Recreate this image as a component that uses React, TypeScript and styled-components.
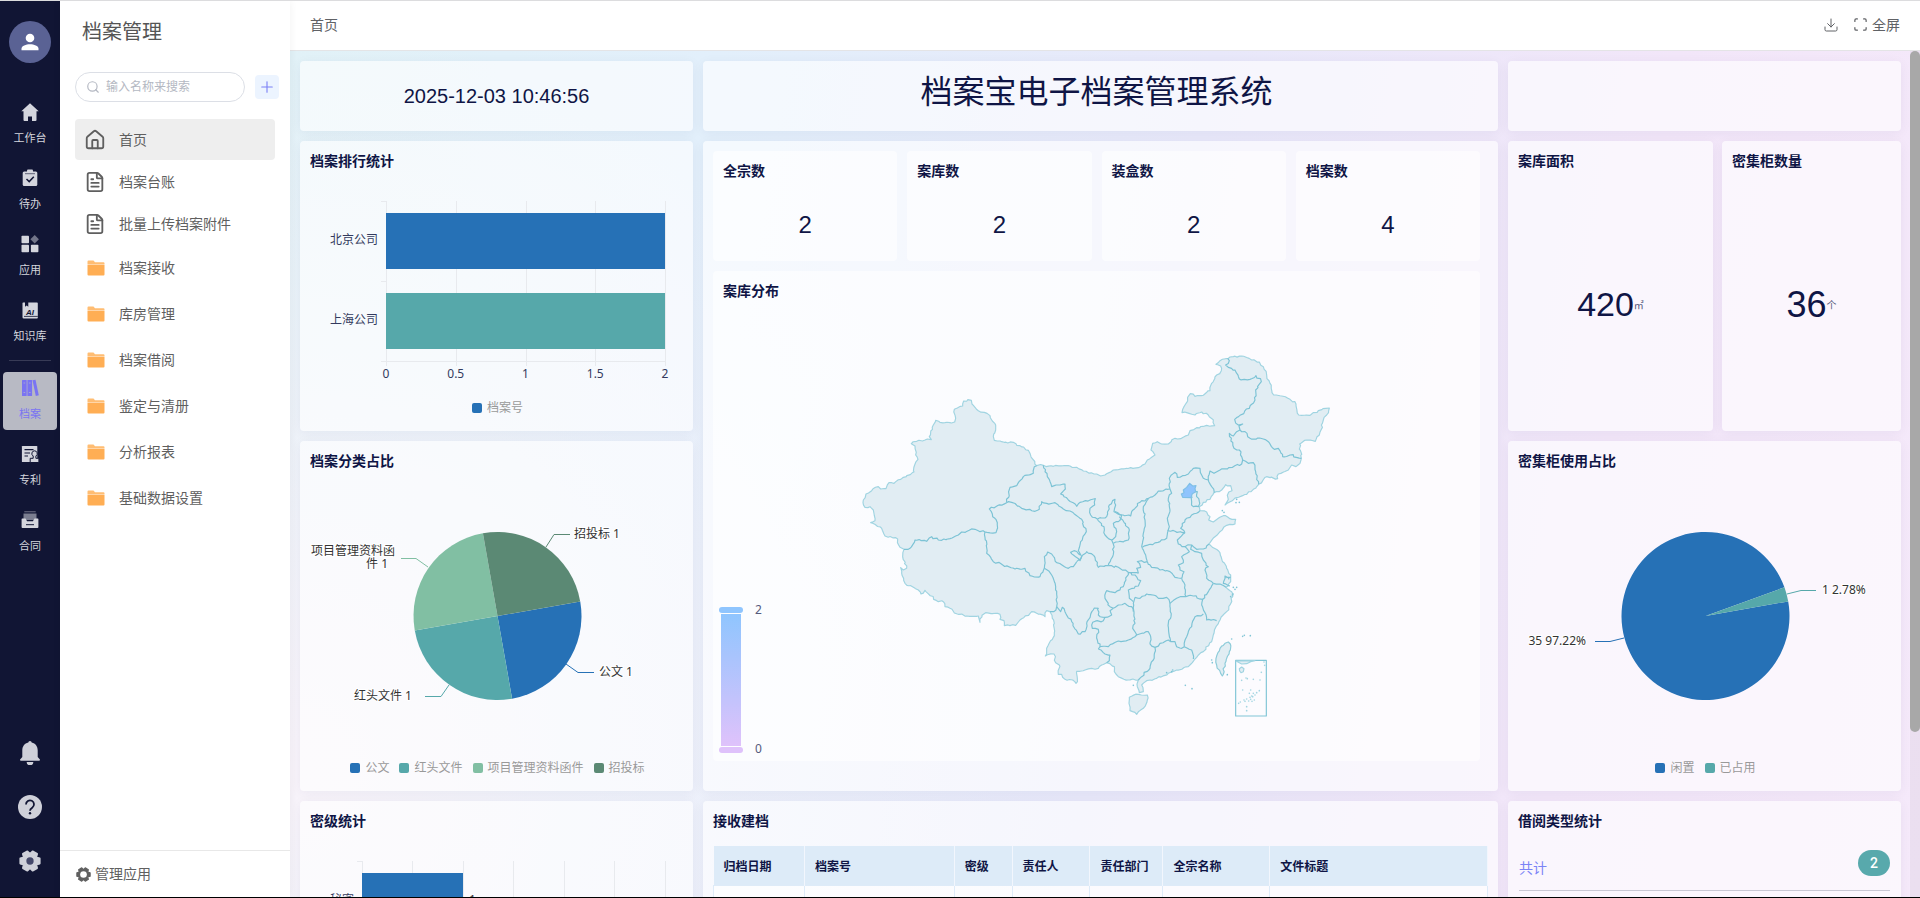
import React from "react";
import styled, { createGlobalStyle, css } from "styled-components";
import { Download, FileText, House, Plus, Scan, Search } from "lucide-react";

const sans = `"Noto Sans", "Noto Sans CJK SC", sans-serif`;
const arial = `"Liberation Sans", "Noto Sans CJK SC", sans-serif`;
const navy = "#0f1545";
const palette = {
  blue: "#2671b6",
  teal: "#56a8aa",
  green: "#81bfa3",
  moss: "#5b8974",
};

const GlobalStyle = createGlobalStyle`
  * { box-sizing: border-box; }
  body { margin: 0; font-family: ${sans}; font-size: 14px; color: #606266; }
  button { font: inherit; border: 0; padding: 0; background: none; cursor: pointer; }
  a { color: inherit; text-decoration: none; }
  h1, h2, p { margin: 0; font-weight: 400; }
`;

/* ---------- shell ---------- */

const Shell = styled.div`
  display: flex;
  height: 100vh;
  border-top: 1px solid #dcdcde;
  border-bottom: 1px solid #000;
  overflow: hidden;
  background: #fff;
`;

const Rail = styled.aside`
  display: flex;
  flex-direction: column;
  align-items: center;
  flex: none;
  width: 60px;
  padding: 20px 3px 24px;
  background: #111534;
`;

const Avatar = styled.button`
  display: grid;
  place-items: center;
  width: 42px;
  height: 42px;
  flex: none;
  border-radius: 50%;
  background: #5a6294;
`;

const RailNav = styled.nav`
  display: flex;
  flex-direction: column;
  align-items: center;
  gap: 8px;
  width: 100%;
  margin-top: 33px;
`;

const RailItem = styled.button<{ $active?: boolean }>`
  display: flex;
  flex-direction: column;
  align-items: center;
  gap: 8px;
  width: 100%;
  height: 58px;
  padding-top: 7px;
  border-radius: 4px;
  font-size: 11px;
  line-height: 18px;
  color: #d4d5dd;
  ${(p) =>
    p.$active &&
    css`
      background: #b8bac4;
      color: #7a74f2;
    `}
`;

const RailDivider = styled.hr`
  width: 42px;
  height: 1px;
  margin: 0 0 3px;
  border: 0;
  background: #383b56;
`;

const RailTools = styled.div`
  display: flex;
  flex-direction: column;
  gap: 30px;
  margin-top: auto;
`;

const RailTool = styled.button`
  display: grid;
  place-items: center;
  width: 24px;
  height: 24px;
  color: #cfd0d9;
`;

const Side = styled.aside`
  display: flex;
  flex-direction: column;
  flex: none;
  width: 230px;
  background: #fff;
  position: relative;
  z-index: 1;
  box-shadow: 0 0 8px rgba(0, 0, 0, 0.06);
`;

const SideTitle = styled.h1`
  padding: 16px 22px 0;
  font-size: 20px;
  line-height: 30px;
  color: #555;
`;

const SearchRow = styled.form`
  display: flex;
  align-items: center;
  gap: 10px;
  padding: 25px 11px 17px 15px;
`;

const SearchBox = styled.label`
  display: flex;
  align-items: center;
  gap: 6px;
  width: 170px;
  height: 30px;
  padding: 0 10px;
  border: 1px solid #dcdfe6;
  border-radius: 15px;
  color: #b4b8c2;

  svg {
    flex: none;
  }

  input {
    width: 100%;
    min-width: 0;
    padding: 0;
    border: 0;
    outline: 0;
    background: none;
    font-family: inherit;
    font-size: 12px;
    line-height: 18px;
    color: #606266;
  }

  input::placeholder {
    color: #b4b8c2;
  }
`;

const AddButton = styled.button`
  display: grid;
  place-items: center;
  width: 24px;
  height: 24px;
  border-radius: 4px;
  background: #ecf4ff;
  color: #7b80f6;
`;

const Menu = styled.nav`
  display: flex;
  flex-direction: column;
  padding: 0 15px;
`;

const MenuItem = styled.a<{ $active?: boolean; $folder?: boolean }>`
  display: flex;
  align-items: center;
  gap: 13px;
  height: ${(p) => (p.$folder ? "46px" : "41px")};
  margin-bottom: ${(p) => (p.$folder ? "0" : "1px")};
  padding-left: 9px;
  border-radius: 4px;
  font-size: 14px;
  line-height: 20px;
  color: #5f5f5f;
  background: ${(p) => (p.$active ? "#eeeeee" : "transparent")};
`;

const SideFooter = styled.button`
  display: flex;
  align-items: center;
  gap: 4px;
  height: 47px;
  margin-top: auto;
  padding-left: 16px;
  border-top: 1px solid #e8e8e8;
  line-height: 20px;
  color: #606060;
`;

const Main = styled.main`
  display: flex;
  flex-direction: column;
  flex: 1;
  min-width: 0;
`;

const TopBar = styled.header`
  display: flex;
  align-items: center;
  gap: 14px;
  flex: none;
  height: 50px;
  padding: 0 20px 2px;
  border-bottom: 1px solid #e4e4e6;
  line-height: 20px;
`;

const Crumb = styled.span`
  flex: 1;
`;

const TopButton = styled.button`
  display: flex;
  align-items: center;
  gap: 4px;
  line-height: 20px;
  color: #606266;
`;

const Stage = styled.div`
  display: flex;
  flex: 1;
  min-height: 0;
  background: radial-gradient(circle at 0% 85%, #f8f3fa 0%, rgba(244, 241, 249, 0) 42%),
    linear-gradient(100deg, #e0f1f7 0%, #e2effb 24%, #e8e8fa 52%, #f2e6f9 78%, #f5e9fa 100%);
`;

const Scroller = styled.div`
  flex: 1;
  min-width: 0;
  overflow-y: auto;
  scrollbar-width: none;
`;

const ScrollTrack = styled.div`
  flex: none;
  width: 10px;
  background: rgba(0, 0, 0, 0.04);
`;

const ScrollThumb = styled.div`
  height: 80.5%;
  border-radius: 5px;
  background: #a8a8a8;
`;

/* ---------- dashboard ---------- */

const Board = styled.div`
  display: grid;
  grid-template-columns: 393fr 795fr 393fr;
  grid-template-rows: 70px 290px 350px 291px;
  gap: 10px;
  padding: 10px 9px 10px 10px;
`;

const Card = styled.section<{ $tall?: boolean }>`
  display: flex;
  flex-direction: column;
  min-width: 0;
  border-radius: 4px;
  background: rgba(255, 255, 255, 0.62);
  box-shadow: 0 2px 12px rgba(20, 30, 80, 0.05);
  grid-row: ${(p) => (p.$tall ? "span 2" : "auto")};
`;

const InnerCard = styled.section`
  display: flex;
  flex-direction: column;
  min-width: 0;
  border-radius: 4px;
  background: rgba(255, 255, 255, 0.6);
`;

const CardTitle = styled.h2`
  flex: none;
  padding: 9px 10px 7px;
  font-size: 14px;
  font-weight: 600;
  line-height: 21px;
  color: ${navy};
`;

const Clock = styled.time`
  margin: auto;
  font-family: ${arial};
  font-size: 20px;
  line-height: 30px;
  color: ${navy};
`;

const SystemName = styled.h2`
  padding: 10px 8px 0 0;
  text-align: center;
  font-size: 32px;
  line-height: 40px;
  color: ${navy};
`;

const Center = styled.div`
  display: flex;
  flex-direction: column;
  gap: 10px;
  padding: 10px 18px 30px 10px;
  flex: 1;
`;

const Stats = styled.div`
  display: grid;
  grid-template-columns: repeat(4, 1fr);
  gap: 10px;

  section {
    height: 110px;
  }
`;

const MapCard = styled(InnerCard)`
  flex: 1;
`;

const Value = styled.p<{ $size?: number }>`
  display: flex;
  align-items: center;
  justify-content: center;
  flex: 1;
  font-family: ${arial};
  font-size: ${(p) => p.$size ?? 24}px;
  color: ${navy};

  small {
    font-size: 10px;
    color: #555a7c;
  }
`;

const Pair = styled.div`
  display: grid;
  grid-template-columns: 205fr 179fr;
  gap: 9px;
`;

const Chart = styled.svg`
  display: block;
  flex: 1;
  width: 100%;
  min-height: 0;
  font-family: ${sans};
  font-size: 12px;
`;

const PieLabel = styled.text`
  fill: #333;
  stroke: #fff;
  stroke-width: 2px;
  paint-order: stroke;
`;

const Legend = styled.ul`
  display: flex;
  flex: none;
  justify-content: center;
  gap: 10px;
  height: 20px;
  margin: 0 0 13px;
  padding: 0 0 0 2px;
  list-style: none;
  font-size: 12px;
  line-height: 20px;
  color: #999;
`;

const LegendItem = styled.li<{ $color: string }>`
  display: flex;
  align-items: center;
  gap: 5px;

  &::before {
    content: "";
    width: 10px;
    height: 10px;
    border-radius: 2px;
    background: ${(p) => p.$color};
  }
`;

const Table = styled.table`
  width: calc(100% - 20px);
  margin: 8px 10px 0;
  border-collapse: collapse;
  table-layout: fixed;
  font-size: 12px;
  color: ${navy};

  th {
    height: 39px;
    padding: 4px 10px 0;
    border-right: 1px solid #f2f6fd;
    background: #ddebf8;
    font-weight: 600;
    line-height: 18px;
    text-align: left;
  }

  td {
    height: 39px;
    padding: 0 10px;
    border: 1px solid #deebf8;
    background: rgba(255, 255, 255, 0.6);
  }
`;

const TotalRow = styled.div`
  display: flex;
  align-items: flex-start;
  justify-content: space-between;
  height: 41px;
  margin: 12px 11px 0;
  border-bottom: 1px solid #c9c8d4;
`;

const TotalLink = styled.a`
  padding-top: 8px;
  line-height: 20px;
  color: #7a84f6;
`;

const Badge = styled.span`
  width: 32px;
  border-radius: 13px;
  background: #58a9ac;
  font-family: Roboto, sans-serif;
  font-weight: 500;
  line-height: 26px;
  text-align: center;
  color: #fff;
`;

/* ---------- icons ---------- */

const dark = "#111534";

const Glyph = ({ children, size = 18 }: { children: React.ReactNode; size?: number }) => (
  <svg width={size} height={size} viewBox="0 0 18 18" fill="currentColor" aria-hidden="true">
    {children}
  </svg>
);

const railIcons: Record<string, React.ReactNode> = {
  home: <path d="M9 .2.3 8.3h2.2V17a1 1 0 0 0 1 1H7v-4.6h4V18h3.500a1 1 0 0 0 1-1V8.300h2.200Z" />,
  todo: (
    <>
      <rect x="1.700" y="2.500" width="14.600" height="14.500" rx="1.500" />
      <rect x="6" y="0.500" width="6" height="4" rx="1" />
      <path d="M4 4.700h10" stroke={dark} strokeWidth=".6" />
      <path d="m5.500 10 2.700 2.600 4.600-4.800" fill="none" stroke={dark} strokeWidth="1.500" />
    </>
  ),
  apps: (
    <>
      <rect x="0.500" y="0.700" width="7.500" height="7.500" rx=".8" />
      <rect x="0.500" y="9.800" width="7.500" height="7.500" rx=".8" />
      <rect x="9.900" y="9.800" width="7.500" height="7.500" rx=".8" />
      <path d="m13.700 0 4.200 4.300-4.200 4.300-4.300-4.300Z" opacity=".5" />
    </>
  ),
  ai: (
    <>
      <path d="M2 1.500h2v4.200l1.700-1.300 1.600 1.300V1.500H16a.8.8 0 0 1 .8.8v14.500a.8.8 0 0 1-.8.8H2.800a1.300 1.300 0 0 1-1.300-1.300V2Z" />
      <path d="M3 15.400h13.800" stroke={dark} strokeWidth=".8" />
      <text x="5" y="13.500" fill={dark} fontSize="8" fontWeight="700" fontStyle="italic" fontFamily="Liberation Sans, sans-serif">
        AI
      </text>
    </>
  ),
  books: (
    <>
      <rect x="1" y="1" width="4.700" height="16" rx=".5" />
      <rect x="6.400" y="1" width="4.700" height="16" rx=".5" />
      <path d="m11.500 1.200 3-.5 3.300 15.500-3 .7Z" />
      <path d="M2.500 13.500h1.700M7.900 13.500h1.700M2.500 4h1.700M7.900 4h1.700" stroke="#b8bac4" strokeWidth=".7" />
    </>
  ),
  patent: (
    <>
      <path d="M1.500 1h14.200a.6.6 0 0 1 .6.6V17H1.500a.6.600 0 0 1-.6-.6V1.600A.6.6 0 0 1 1.500 1Z" />
      <path d="M3.500 4.700h9M3.500 8h5.500M3.500 11h3.500" stroke={dark} strokeWidth="1.200" />
      <path d="M13.500 5.800a2.800 2.800 0 0 1 1.400 5.200v2.300h3v4.200H9.200v-4.200h3V11a2.800 2.800 0 0 1 1.300-5.200Z" stroke={dark} />
    </>
  ),
  tray: (
    <>
      <path d="M3.300.8h11.400" stroke="currentColor" opacity=".5" />
      <path d="M2.500 2.500h13v6.500h-13Z" opacity=".55" />
      <path d="M1.200 7.500h3.300l1.600 2.800h5.800l1.600-2.800h3.300a.6.6 0 0 1 .6.6V16a.9.9 0 0 1-.9.9H1.500a.9.9 0 0 1-.9-.9V8.100a.6.6 0 0 1 .6-.6Z" />
      <path d="M5 13.700h8" stroke={dark} />
    </>
  ),
};

/** Six-toothed cog, teeth on the horizontal axis. */
const cogPath = Array.from({ length: 6 }, (_, i) =>
  [
    [-15, 8.2],
    [15, 8.2],
    [30, 5.8],
  ].map(([offset, radius]) => {
    const angle = ((i * 60 + offset) * Math.PI) / 180;
    return `${(9 + radius * Math.cos(angle)).toFixed(2)},${(9 + radius * Math.sin(angle)).toFixed(2)}`;
  })
)
  .flat()
  .join(" ");

const Cog = ({ size, hole, holeFill }: { size: number; hole: number; holeFill: string }) => (
  <Glyph size={size}>
    <polygon points={cogPath} stroke="currentColor" strokeWidth="1.500" strokeLinejoin="round" />
    <circle cx="9" cy="9" r={hole} fill={holeFill} />
  </Glyph>
);

const FolderIcon = () => (
  <svg width="22" height="22" viewBox="-2 -1 22 22" aria-hidden="true">
    <path d="M1.500 3.500a1 1 0 0 1 1-1h5l1.500 1.700h8.500a1 1 0 0 1 1 1v.8h-17Z" fill="#ffbd73" />
    <path d="M1.500 6.500h17v10a1 1 0 0 1-1 1h-15a1 1 0 0 1-1-1Z" fill="#ffae54" />
  </svg>
);

/* ---------- charts ---------- */

const polar = (cx: number, cy: number, r: number, deg: number) => {
  const a = (deg * Math.PI) / 180;
  return `${(cx + r * Math.cos(a)).toFixed(2)} ${(cy + r * Math.sin(a)).toFixed(2)}`;
};

type Slice = { from: number; to: number; color: string; leader: string };

const Pie = ({ slices, children }: { slices: Slice[]; children: React.ReactNode }) => (
  <Chart viewBox="0 0 393 280" role="img">
    {slices.map((s) => (
      <g key={s.from}>
        <path
          d={`M197.5 138L${polar(197.5, 138, 84, s.from)}A84 84 0 ${s.to - s.from > 180 ? 1 : 0} 1 ${polar(197.5, 138, 84, s.to)}Z`}
          fill={s.color}
        />
        <polyline points={s.leader} fill="none" stroke={s.color} />
      </g>
    ))}
    {children}
  </Chart>
);

const RankingChart = () => (
  <Chart viewBox="0 0 393 220" role="img">
    <g stroke="#e8eaee" shapeRendering="crispEdges">
      {[86, 156, 226, 295, 365].map((x) => (
        <path key={x} d={`M${x}.5 23V188`} />
      ))}
      <path d="M81 23.5h5M81 103.500h5M81 183.500H365" />
    </g>
    <rect x="86" y="35" width="279" height="56" fill={palette.blue} />
    <rect x="86" y="115" width="279" height="56" fill={palette.teal} />
    <g fill="#333a5e" textAnchor="end">
      <text x="78" y="66">北京公司</text>
      <text x="78" y="146">上海公司</text>
    </g>
    <g fill="#333a5e" textAnchor="middle">
      {["0", "0.5", "1", "1.5", "2"].map((t, i) => (
        <text key={t} x={86 + i * 69.75} y="200">
          {t}
        </text>
      ))}
    </g>
  </Chart>
);

const SecrecyChart = () => (
  <Chart viewBox="0 0 393 254" role="img">
    <g stroke="#e8eaee" shapeRendering="crispEdges">
      {[62, 112, 163, 213, 264, 314, 365].map((x) => (
        <path key={x} d={`M${x}.5 23V217`} />
      ))}
      <path d="M57 23.500h5" />
    </g>
    <rect x="62" y="35" width="101" height="56" fill={palette.blue} />
    <text x="54" y="66" textAnchor="end" fill="#333a5e">秘密</text>
    <text x="169" y="66" fill="#333">1</text>
  </Chart>
);

type Point = [number, number];

const parse = (s: string): Point[] => s.trim().split(/\s+/).map((p) => p.split(",").map(Number) as Point);

/** Breaks long straight runs into short uneven ones so borders read as natural lines. */
const natural = (s: string, closed = false) => {
  const pts = parse(s);
  if (closed) pts.push(pts[0]);
  let seed = pts[0][0] + pts[0][1] * 7;
  const rnd = () => {
    seed = (seed * 9301 + 49297) % 233280;
    return seed / 233280 - 0.5;
  };
  const out: string[] = [`M${pts[0]}`];
  for (let i = 1; i < pts.length; i++) {
    const [ax, ay] = pts[i - 1];
    const [bx, by] = pts[i];
    const n = Math.floor(Math.hypot(bx - ax, by - ay) / 7);
    for (let k = 1; k < n; k++) {
      out.push(`L${(ax + ((bx - ax) * k) / n + rnd() * 6).toFixed(1)},${(ay + ((by - ay) * k) / n + rnd() * 6).toFixed(1)}`);
    }
    out.push(`L${bx},${by}`);
  }
  return out.join("") + (closed ? "Z" : "");
};

const mainland = natural(
  `40,480 48,462 65,452 85,440 92,447 108,446 117,428 132,430 160,412 192,396 194,375 204,358 197,345 195,318 184,311 200,304
  232,297 244,299 238,290 250,255 257,241 270,247 300,248 314,246 317,235 313,208 322,204 338,198 341,183 364,181 366,192
  385,212 403,217 420,227 427,243 437,255 437,270 430,290 433,301 455,305 490,307 510,317 535,331 543,350 560,377 580,376
  610,379 660,378 680,382 700,393 740,402 752,408 765,405 790,390 830,385 865,383 885,372 892,360 915,345 903,330 908,310
  922,305 935,312 955,312 975,295 992,296 1015,285 1020,272 1040,263 1070,256 1094,257 1090,240 1075,225 1055,216 1035,225
  1010,218 996,218 1005,195 1021,161 1035,169 1055,167 1080,152 1085,130 1100,105 1114,92 1112,78 1098,73 1110,62 1135,55
  1140,51 1175,48 1205,60 1228,66 1240,80 1250,105 1260,130 1271,165 1295,168 1320,178 1338,192 1346,225 1380,226 1405,212
  1438,204 1430,225 1420,240 1413,270 1396,304 1370,300 1349,312 1354,355 1350,370 1338,380 1325,375 1315,390 1285,402
  1283,416 1250,410 1226,433 1210,448 1190,463 1160,473 1125,495 1135,478 1132,466 1146,452 1142,437 1127,434 1115,450
  1092,458 1080,478 1060,487 1048,500 1050,512 1070,516 1080,530 1076,540 1090,546 1105,535 1120,527 1140,536 1157,538
  1155,552 1130,556 1110,575 1095,590 1077,612 1105,632 1118,665 1130,685 1142,705 1142,725 1128,742 1145,755 1148,770
  1140,795 1130,815 1110,840 1098,860 1092,880 1085,905 1060,935 1035,957 1027,968 1015,980 980,990 955,1000 920,1015
  890,1022 875,1035 880,1055 868,1058 862,1040 865,1020 835,1020 805,1010 793,995 793,980 770,968 755,975 745,985 725,985
  705,990 680,994 682,1015 678,1030 668,1020 645,1018 635,1003 625,1003 628,975 617,968 612,942 586,948 590,925 610,892
  613,850 607,835 600,815 590,812 585,830 545,815 510,840 497,856 463,857 462,842 450,838 450,823 407,818 396,826 390,847
  385,828 350,828 322,822 300,805 285,800 280,785 265,785 225,751 213,762 205,750 165,730 155,700 152,683 160,690 170,685
  158,650 162,628 150,622 143,597 105,588 95,565 62,548 75,542 70,510 60,500 45,502`,
  true
);

const westBorders = [
  "162,628 180,625 195,600 230,604 245,590 265,600 300,596 325,585 335,576 375,568 405,576",
  "405,576 438,578 442,548 428,530 418,507 470,488",
  "470,488 480,442 500,437 520,410 550,400 553,380 560,377",
  "470,488 485,487 515,505 555,514 568,508 575,485 590,490 615,488 640,507 660,513 695,538 709,575 692,605 685,632 695,650 690,662 662,637 672,632 690,645",
  "405,576 410,640 430,665 495,687 525,685 540,707 570,710 583,685",
  "583,685 583,650 593,636 605,642 620,668 655,685 670,680 680,665",
  "583,685 605,705 617,740 620,800 612,815 600,815",
  "620,800 632,815 637,802 665,845 685,882 705,875 710,850 733,804 745,805",
  "680,665 695,650 710,635 735,652 745,682 775,677",
  "580,376 592,410 605,440 645,432 646,447 632,462 655,480 680,499 690,487 736,476 734,495 720,505 722,525 742,537",
  "742,537 770,530 778,495 795,478 797,495 792,515 815,525 805,545 790,550 800,575 797,590 785,600 765,585 762,560 742,537",
  "785,600 790,612 788,650 775,677",
  "808,530 838,570 835,600 790,610",
];

const eastBorders = [
  "165,515 180,525 212,528 215,515 240,487 266,475",
  "266,475 285,465 295,453 330,447",
  "266,475 250,500 255,540 250,580 247,625",
  "247,625 257,645 262,665",
  "330,447 335,460 325,475 330,510 322,535 328,560 323,575",
  "323,575 320,595 300,605 247,622",
  "330,447 328,415 345,397 352,412 385,402 400,385 420,385 425,405 430,415 445,420",
  "445,420 450,393 462,400 480,390 545,372 548,360",
  "445,420 455,440 463,458",
  "548,360 565,370 580,368 587,395 596,433",
  "548,360 538,330 522,325 508,280 520,288 530,275 540,270",
  "540,270 555,275 570,295 610,297 625,305 643,328 655,325 668,350 690,345 724,355",
  "540,270 537,258 548,252 535,255 524,238 568,205 585,180 587,150 604,125 588,107 570,118 538,117 525,90 505,82 497,75 508,62 503,55",
  "403,455 412,455 410,470 418,485 415,500 400,500 395,485 397,470",
  "420,512 395,525 375,540 362,565 375,578",
  "323,572 345,574 375,578",
  "375,578 352,600 355,612 375,620",
  "375,620 395,615 410,628 430,627 447,612",
  "375,620 388,635 365,650 370,668 355,675 360,690 372,695 365,715",
  "262,665 275,682 300,690 330,695 345,712 365,715",
  "262,665 232,665 242,682 230,685 235,700",
  "395,615 392,628 405,635 425,640 430,660 445,680 435,690 440,715 460,730",
  "460,730 480,732 498,742",
  "512,712 495,708 490,730 510,738",
  "460,730 445,755 428,778",
  "365,715 375,735 378,770",
  "378,770 400,768 428,778 425,795 435,818 440,840 470,842",
  "430,822 405,830 395,860 380,890 373,920",
  "373,920 365,925 350,920 345,905 332,905",
  "378,770 350,775 330,790 333,830 325,850 332,905",
  "330,790 320,772 300,775 260,762 240,775 225,772",
  "205,697 225,705 242,722 235,738 205,750 208,775 220,785",
  "225,772 220,790 225,850 218,865 230,885",
  "145,677 175,682 205,697 235,700",
  "205,697 190,740 165,758 140,752 135,775 150,800 160,805",
  "160,805 175,795 195,790 215,800 220,815",
  "160,805 150,812 155,825 135,832 115,825 115,804",
  "135,832 130,842 98,847 97,865 115,868 112,900 120,920 115,927",
  "120,920 145,920 175,903 205,900 230,885",
  "230,885 265,875 272,890 270,912 285,922",
  "285,922 300,910 325,900 332,905",
  "285,922 280,960 270,985 245,1010 235,1020",
  "115,927 130,938 150,945 148,962 140,968",
  "373,920 395,930 400,957",
];

const hainan = natural("208,1072 235,1063 262,1065 262,1080 250,1105 230,1123 210,1112 207,1090", true);
const taiwan = natural("495,910 505,906 511,912 508,935 495,970 487,1008 482,1000 470,975 468,955 480,925", true);
const beijing = "364,462 372,458 370,450 380,442 389,430 398,438 408,437 405,446 407,455 397,461 393,473 368,472";

const islets = parse(
  `376,1036 396,1046 455,960 457,968 515,897 548,889 553,886 571,887 502,1004 220,1036 530,478 538,487 528,488 487,512
  492,517 520,742 525,748 530,742 517,765 512,770 519,762 320,998 335,995 338,990 498,712 506,716`
);

const reefs = parse(
  `612,966 614,976 604,997 558,1014 562,1016 580,1018 600,1020 545,1021 548,1050 552,1080 560,1077 566,1083 570,1072 575,1068
  572,1078 580,1060 578,1070 585,1065 590,1058 598,1052 583,1080 576,1084 568,1060 560,1100 560,1112 536,1090 541,1086 555,1084 572,1050`
);

const ChinaMap = () => (
  <Chart viewBox="0 0 767 453" role="img">
    <defs>
      <linearGradient id="scale" x1="0" y1="0" x2="0" y2="1">
        <stop offset="0" stopColor="#8fc5fe" />
        <stop offset="1" stopColor="#dfc2fb" />
      </linearGradient>
    </defs>
    <g transform="translate(137 32) scale(.33333)" fill="#e1edf3" stroke="#a0d4e1" strokeWidth="3.500" strokeLinejoin="round">
      <path d={mainland} />
      <g fill="none" stroke="#7cc3d5">
        {westBorders.map((b) => (
          <path key={b} d={natural(b)} />
        ))}
      </g>
      <g transform="translate(630 0)">
        <g fill="none" stroke="#7cc3d5">
          {eastBorders.map((b) => (
            <path key={b} d={natural(b)} />
          ))}
        </g>
        <path d={hainan} />
        <path d={taiwan} stroke="#8ccbd9" />
        <polygon points={beijing} fill="#8fc4fd" stroke="#7fbfe6" />
        <g fill="#80c5d6" stroke="none">
          {islets.map(([x, y]) => (
            <circle key={`${x}-${y}`} cx={x} cy={y} r="2.500" />
          ))}
        </g>
        <rect x="527" y="961" width="92" height="167" fill="none" stroke="#80c5d6" />
        <path d="M528 963 545 972 560 971 572 965 585 962Z" />
        <path d="M538 986 545 981 552 986 550 995 543 998 539 993Z" />
        <g fill="#a3d5e2" stroke="none">
          {reefs.map(([x, y]) => (
            <circle key={`${x}-${y}`} cx={x} cy={y} r="2.500" />
          ))}
        </g>
      </g>
    </g>
    <rect x="8" y="306" width="20" height="132" fill="url(#scale)" />
    <rect x="6" y="299" width="24" height="6" rx="3" fill="#8fc5fe" />
    <rect x="6" y="439" width="24" height="6" rx="3" fill="#dfc2fb" />
    <g fill="#555a7c">
      <text x="42" y="306">2</text>
      <text x="42" y="445">0</text>
    </g>
  </Chart>
);

/* ---------- data ---------- */

const railTop = [
  { icon: "home", label: "工作台" },
  { icon: "todo", label: "待办" },
  { icon: "apps", label: "应用" },
  { icon: "ai", label: "知识库" },
];

const railApps = [
  { icon: "books", label: "档案", active: true },
  { icon: "patent", label: "专利" },
  { icon: "tray", label: "合同" },
];

const folders = ["档案接收", "库房管理", "档案借阅", "鉴定与清册", "分析报表", "基础数据设置"];

const stats = [
  { title: "全宗数", value: 2 },
  { title: "案库数", value: 2 },
  { title: "装盒数", value: 2 },
  { title: "档案数", value: 4 },
];

const columns = [
  { title: "归档日期", width: 91 },
  { title: "档案号", width: 150 },
  { title: "密级", width: 58 },
  { title: "责任人", width: 78 },
  { title: "责任部门", width: 73 },
  { title: "全宗名称", width: 107 },
  { title: "文件标题", width: 218 },
];

const tableWidth = columns.reduce((sum, c) => sum + c.width, 0);

export default function App() {
  return (
    <>
      <GlobalStyle />
      <Shell>
        <Rail>
          <Avatar aria-label="个人中心">
            <svg width="18" height="18" viewBox="0 0 18 18" fill="#fff" aria-hidden="true">
              <circle cx="9" cy="5" r="4.300" />
              <path d="M.5 17.300v-1.500c0-3 4.500-4.600 8.500-4.600s8.500 1.600 8.500 4.600v1.500Z" />
            </svg>
          </Avatar>
          <RailNav>
            {railTop.map((it) => (
              <RailItem key={it.label}>
                <Glyph>{railIcons[it.icon]}</Glyph>
                {it.label}
              </RailItem>
            ))}
            <RailDivider />
            {railApps.map((it) => (
              <RailItem key={it.label} $active={it.active}>
                <Glyph>{railIcons[it.icon]}</Glyph>
                {it.label}
              </RailItem>
            ))}
          </RailNav>
          <RailTools>
            <RailTool aria-label="通知">
              <svg width="24" height="24" viewBox="0 0 24 24" fill="currentColor" aria-hidden="true">
                <path d="M12 0a1.700 1.700 0 0 1 1.700 1.600C17.500 2.500 19.700 5.500 19.700 9.500V16l2 2.300a.8.8 0 0 1-.6 1.400H2.900a.8.8 0 0 1-.6-1.400l2-2.300V9.500c0-4 2.200-7 6-7.900A1.700 1.700 0 0 1 12 0Z" />
                <path d="M8.700 21h6.600a3.300 3.300 0 0 1-6.600 0Z" />
              </svg>
            </RailTool>
            <RailTool aria-label="帮助">
              <svg width="24" height="24" viewBox="0 0 24 24" aria-hidden="true">
                <circle cx="12" cy="12" r="12" fill="currentColor" />
                <path d="M8 9.500a4 4 0 1 1 6.200 3.200c-1.500 1-2.200 1.500-2.200 3" fill="none" stroke={dark} strokeWidth="1.800" />
                <circle cx="12" cy="18.300" r="1.200" fill={dark} />
              </svg>
            </RailTool>
            <RailTool aria-label="设置">
              <Cog size={22} hole={3} holeFill="#45486a" />
            </RailTool>
          </RailTools>
        </Rail>

        <Side>
          <SideTitle>档案管理</SideTitle>
          <SearchRow>
            <SearchBox>
              <Search size={14} strokeWidth={2} />
              <input type="text" placeholder="输入名称来搜索" aria-label="搜索" />
            </SearchBox>
            <AddButton type="button" aria-label="新增">
              <Plus size={18} strokeWidth={1.5} />
            </AddButton>
          </SearchRow>
          <Menu>
            <MenuItem href="#home" $active>
              <House size={22} strokeWidth={2} />
              首页
            </MenuItem>
            <MenuItem href="#ledger">
              <FileText size={22} strokeWidth={2} />
              档案台账
            </MenuItem>
            <MenuItem href="#upload">
              <FileText size={22} strokeWidth={2} />
              批量上传档案附件
            </MenuItem>
            {folders.map((f) => (
              <MenuItem key={f} href={`#${f}`} $folder>
                <FolderIcon />
                {f}
              </MenuItem>
            ))}
          </Menu>
          <SideFooter>
            <Cog size={15} hole={4} holeFill="#fff" />
            管理应用
          </SideFooter>
        </Side>

        <Main>
          <TopBar>
            <Crumb>首页</Crumb>
            <TopButton aria-label="下载">
              <Download size={16} strokeWidth={1.5} />
            </TopButton>
            <TopButton>
              <Scan size={15} strokeWidth={2} />
              全屏
            </TopButton>
          </TopBar>
          <Stage>
            <Scroller>
              <Board>
                <Card>
                  <Clock>2025-12-03 10:46:56</Clock>
                </Card>
                <Card>
                  <SystemName>档案宝电子档案管理系统</SystemName>
                </Card>
                <Card />

                <Card>
                  <CardTitle>档案排行统计</CardTitle>
                  <RankingChart />
                  <Legend>
                    <LegendItem $color={palette.blue}>档案号</LegendItem>
                  </Legend>
                </Card>
                <Card $tall>
                  <Center>
                    <Stats>
                      {stats.map((s) => (
                        <InnerCard key={s.title}>
                          <CardTitle>{s.title}</CardTitle>
                          <Value>{s.value}</Value>
                        </InnerCard>
                      ))}
                    </Stats>
                    <MapCard>
                      <CardTitle>案库分布</CardTitle>
                      <ChinaMap />
                    </MapCard>
                  </Center>
                </Card>
                <Pair>
                  <Card>
                    <CardTitle>案库面积</CardTitle>
                    <Value $size={34}>
                      420<small>㎡</small>
                    </Value>
                  </Card>
                  <Card>
                    <CardTitle>密集柜数量</CardTitle>
                    <Value $size={36}>
                      36<small>个</small>
                    </Value>
                  </Card>
                </Pair>

                <Card>
                  <CardTitle>档案分类占比</CardTitle>
                  <Pie
                    slices={[
                      { from: -10, to: 80, color: palette.blue, leader: "266,186 278,194.5 294,194.5" },
                      { from: 80, to: 170, color: palette.teal, leader: "149,207 141,218.5 125,218.5" },
                      { from: 170, to: 260, color: palette.green, leader: "128,89 116,80.5 101,80.5" },
                      { from: 260, to: 350, color: palette.moss, leader: "246,69 254,56.5 270,56.5" },
                    ]}
                  >
                    <PieLabel x="299" y="198">公文 1</PieLabel>
                    <PieLabel x="112" y="222" textAnchor="end">红头文件 1</PieLabel>
                    <PieLabel x="95" y="77" textAnchor="end">项目管理资料函</PieLabel>
                    <PieLabel x="88" y="90" textAnchor="end">件 1</PieLabel>
                    <PieLabel x="274" y="60">招投标 1</PieLabel>
                  </Pie>
                  <Legend>
                    <LegendItem $color={palette.blue}>公文</LegendItem>
                    <LegendItem $color={palette.teal}>红头文件</LegendItem>
                    <LegendItem $color={palette.green}>项目管理资料函件</LegendItem>
                    <LegendItem $color={palette.moss}>招投标</LegendItem>
                  </Legend>
                </Card>
                <Card>
                  <CardTitle>密集柜使用占比</CardTitle>
                  <Pie
                    slices={[
                      { from: -10, to: 340, color: palette.blue, leader: "116,160 102,163.5 87,163.5" },
                      { from: -20, to: -10, color: palette.teal, leader: "279,116 293,112.5 308,112.5" },
                    ]}
                  >
                    <PieLabel x="314" y="116">1 2.78%</PieLabel>
                    <PieLabel x="78" y="167" textAnchor="end">35 97.22%</PieLabel>
                  </Pie>
                  <Legend>
                    <LegendItem $color={palette.blue}>闲置</LegendItem>
                    <LegendItem $color={palette.teal}>已占用</LegendItem>
                  </Legend>
                </Card>

                <Card>
                  <CardTitle>密级统计</CardTitle>
                  <SecrecyChart />
                </Card>
                <Card>
                  <CardTitle>接收建档</CardTitle>
                  <Table>
                    <colgroup>
                      {columns.map((c) => (
                        <col key={c.title} style={{ width: `${(c.width / tableWidth) * 100}%` }} />
                      ))}
                    </colgroup>
                    <thead>
                      <tr>
                        {columns.map((c) => (
                          <th key={c.title} scope="col">
                            {c.title}
                          </th>
                        ))}
                      </tr>
                    </thead>
                    <tbody>
                      {[0, 1, 2].map((r) => (
                        <tr key={r}>
                          {columns.map((c) => (
                            <td key={c.title} />
                          ))}
                        </tr>
                      ))}
                    </tbody>
                  </Table>
                </Card>
                <Card>
                  <CardTitle>借阅类型统计</CardTitle>
                  <TotalRow>
                    <TotalLink href="#total">共计</TotalLink>
                    <Badge>2</Badge>
                  </TotalRow>
                </Card>
              </Board>
            </Scroller>
            <ScrollTrack>
              <ScrollThumb />
            </ScrollTrack>
          </Stage>
        </Main>
      </Shell>
    </>
  );
}
